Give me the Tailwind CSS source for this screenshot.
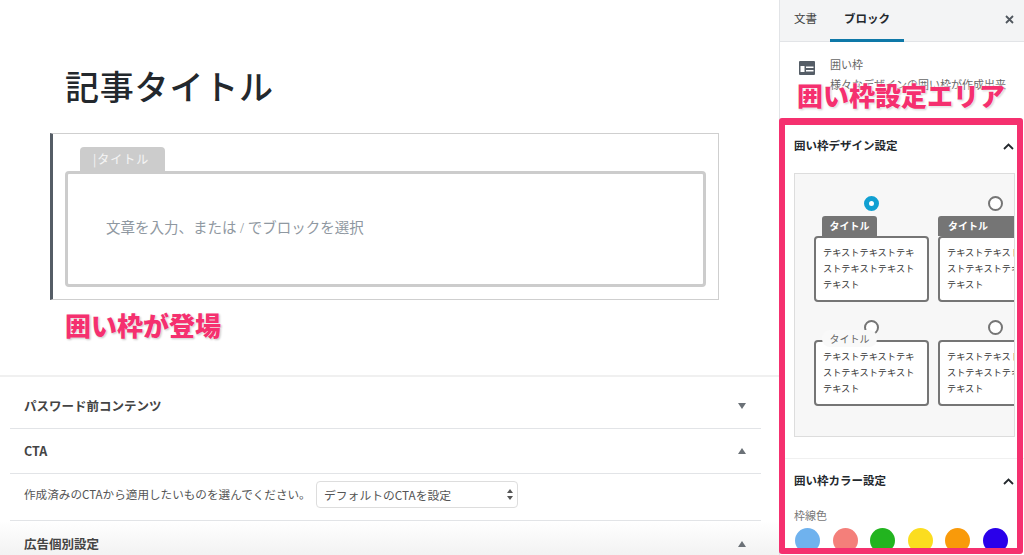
<!DOCTYPE html>
<html lang="ja">
<head>
  <meta charset="UTF-8">
  <meta name="viewport" content="width=device-width, initial-scale=1.0">
  <title>記事タイトル</title>
  <script src="https://cdn.jsdelivr.net/npm/@tailwindcss/browser@4"></script>
</head>
<body class="bg-white">
  <div class="relative flex w-[1024px] h-[555px] overflow-hidden font-['Noto_Sans_CJK_JP',sans-serif] text-[#23282d]">

    <!-- editor -->
    <main class="w-[779px] shrink-0 flex flex-col">
      <div class="h-[133px] shrink-0 pl-[65px] pt-[63px]">
        <h1 class="text-[34px] leading-[52px] font-medium tracking-[0.8px] font-['Liberation_Serif','Noto_Sans_CJK_JP',serif]">記事タイトル</h1>
      </div>

      <div class="ml-[50px] w-[669px] h-[167px] shrink-0 border border-[#cfcfcf] border-l-[3px] border-l-[#555d66] pl-[12px] pr-[12px] pt-[13px]">
        <div class="ml-[15px] w-[85px] h-[24px] bg-[#cccccc] rounded-t-[4px] pl-[13px] text-[12px] leading-[24px] tracking-[1px] text-white/80">|タイトル</div>
        <div class="h-[116px] border-[3px] border-[#cccccc] rounded-[4px] pl-[38px] flex items-center text-[14.5px] text-[#8f98a1] font-['Liberation_Serif','Noto_Sans_CJK_JP',serif]">文章を入力、または / でブロックを選択</div>
      </div>

      <div class="h-[75px] shrink-0 pl-[65px] pt-[7px]">
        <p class="text-[26px] leading-[36px] font-black text-[#f5306f] [text-shadow:0_0_3px_#fff,1px_1px_2px_rgba(0,0,0,0.3)]">囲い枠が登場</p>
      </div>

      <section class="flex-1 border-t-2 border-[#f0f0f0] pl-[10px] pr-[18px]">
        <div class="h-[52px] border-b border-[#e2e4e7] pl-[14px] pr-[14px] pt-[7px] flex items-center justify-between">
          <h3 class="text-[12.5px] font-bold text-[#444]">パスワード前コンテンツ</h3>
          <svg class="w-[8px] h-[6px] mr-[1px]" viewBox="0 0 8 6"><path d="M0 0h8L4 6z" fill="#6b7177"/></svg>
        </div>
        <div class="h-[45px] border-b border-[#e2e4e7] pl-[14px] pr-[14px] flex items-center justify-between">
          <h3 class="text-[12.5px] font-bold text-[#444]">CTA</h3>
          <svg class="w-[8px] h-[6px] mr-[1px]" viewBox="0 0 8 6"><path d="M0 6h8L4 0z" fill="#6b7177"/></svg>
        </div>
        <div class="h-[47px] border-b border-[#e2e4e7] pl-[14px] pt-[7px] flex items-start">
          <p class="text-[11.6px] leading-[26px] text-[#555] w-[292px] whitespace-nowrap">作成済みのCTAから適用したいものを選んでください。</p>
          <div class="w-[202px] h-[27px] border border-[#dddddd] rounded-[4px] pl-[7px] pr-[4px] flex items-center justify-between text-[11.8px] text-[#555]">
            <span>デフォルトのCTAを設定</span>
            <svg class="w-[6px] h-[11px]" viewBox="0 0 6 11"><path d="M0 4h6L3 0zM0 7h6l-3 4z" fill="#555"/></svg>
          </div>
        </div>
        <div class="-ml-[10px] -mr-[18px] pl-[10px] pr-[18px] h-[40px] bg-gradient-to-b from-white to-[#f0f0f0]">
          <div class="pl-[14px] pr-[14px] h-[46px] flex items-center justify-between">
            <h3 class="text-[12.5px] font-bold text-[#444]">広告個別設定</h3>
            <svg class="w-[8px] h-[6px] mr-[1px]" viewBox="0 0 8 6"><path d="M0 6h8L4 0z" fill="#6b7177"/></svg>
          </div>
        </div>
      </section>
    </main>

    <!-- sidebar -->
    <aside class="w-[245px] shrink-0 border-l border-[#e2e4e7] flex flex-col">
      <div class="h-[42px] shrink-0 bg-[#f3f4f5] border-b border-[#e2e4e7] flex items-center pl-[14px] pr-[10px] pb-[4px] relative">
        <span class="text-[11.5px] text-[#444] w-[50px]">文書</span>
        <span class="text-[11.5px] font-bold">ブロック</span>
        <svg class="ml-auto w-[9px] h-[9px] mt-[2px]" viewBox="0 0 9 9"><path d="M1 1l7 7M8 1L1 8" stroke="#50575e" stroke-width="1.8"/></svg>
        <div class="absolute left-[50px] bottom-[-1px] w-[74px] h-[3px] bg-[#0e78a8]"></div>
      </div>

      <div class="h-[76px] shrink-0 pl-[19px] pt-[17px] flex gap-[15px] overflow-hidden">
        <svg class="w-[16px] h-[14px] mt-[2px] shrink-0" viewBox="0 0 16 14"><rect width="16" height="14" rx="1" fill="#555d66"/><rect x="1.5" y="5" width="4" height="6" fill="#fff"/><path d="M7 5.5h7.5v1.5H7zM7 9h7.5v1.5H7z" fill="#fff"/></svg>
        <div class="text-[11px] text-[#666] whitespace-nowrap">
          <p class="leading-[14px] mt-[-2px]">囲い枠</p>
          <p class="leading-[14px] mt-[6px]">様々なデザインの囲い枠が作成出来</p>
        </div>
      </div>

      <div class="pl-[14px] pr-[9px]">
        <div class="h-[55px] pt-[19px] flex justify-between pr-[1px]">
          <h3 class="text-[11.5px] font-bold leading-[16px]">囲い枠デザイン設定</h3>
          <svg class="w-[11px] h-[7px] mt-[6px]" viewBox="0 0 11 7"><path d="M1 6l4.5-4.5L10 6" fill="none" stroke="#23282d" stroke-width="1.8"/></svg>
        </div>
        <div class="w-[221px] h-[264px] border border-[#dddddd] bg-[#f7f7f7] overflow-hidden pl-[19px] pt-[22px]">
          <div class="grid grid-cols-[115px_115px] gap-x-[9px] w-[300px]">
            <div class="h-[124px]">
              <div class="mx-auto w-[15px] h-[15px] rounded-full border-[5px] border-[#11a0d2] bg-white"></div>
              <div class="ml-[8px] mt-[5px] w-[55px] h-[20px] bg-[#757575] rounded-t-[3px] text-white text-[10px] font-bold text-center leading-[20px]">タイトル</div>
              <div class="w-[115px] h-[66px] bg-white border-2 border-[#757575] rounded-[4px] px-[7px] py-[6px] text-[9.2px] leading-[16px] text-[#333]">テキストテキストテキストテキストテキストテキスト</div>
            </div>
            <div class="h-[124px]">
              <div class="mx-auto w-[15px] h-[15px] rounded-full border-2 border-[#757575] bg-white"></div>
              <div class="mt-[5px] w-[115px] h-[20px] bg-[#757575] rounded-t-[3px] text-white text-[10px] font-bold pl-[10px] leading-[20px]">タイトル</div>
              <div class="w-[115px] h-[66px] bg-white border-2 border-[#757575] rounded-[4px] px-[7px] py-[6px] text-[9.2px] leading-[16px] text-[#333]">テキストテキストテキストテキストテキストテキスト</div>
            </div>
            <div class="relative">
              <div class="mx-auto w-[15px] h-[15px] rounded-full border-2 border-[#757575] bg-white"></div>
              <div class="w-[115px] h-[66px] mt-[5px] bg-white border-2 border-[#757575] rounded-[4px] px-[7px] pt-[6px] text-[9.2px] leading-[16px] text-[#333]">テキストテキストテキストテキストテキストテキスト</div>
              <div class="absolute left-[8px] top-[10px] w-[55px] h-[17px] bg-[#f9f9f9] rounded-[8px] text-[10px] leading-[17px] text-center text-[#666]">タイトル</div>
            </div>
            <div>
              <div class="mx-auto w-[15px] h-[15px] rounded-full border-2 border-[#757575] bg-white"></div>
              <div class="w-[115px] h-[66px] mt-[5px] bg-white border-2 border-[#757575] rounded-[4px] px-[7px] pt-[6px] text-[9.2px] leading-[16px] text-[#333]">テキストテキストテキストテキストテキストテキスト</div>
            </div>
          </div>
        </div>
      </div>

      <div class="mt-[21px] border-t border-[#f0f0f0] pl-[14px] pr-[10px] pt-[13px]">
        <div class="flex justify-between">
          <h3 class="text-[11.5px] font-bold leading-[16px]">囲い枠カラー設定</h3>
          <svg class="w-[11px] h-[7px] mt-[6px]" viewBox="0 0 11 7"><path d="M1 6l4.5-4.5L10 6" fill="none" stroke="#23282d" stroke-width="1.8"/></svg>
        </div>
        <p class="mt-[20px] text-[11px] leading-[14px] text-[#777]">枠線色</p>
        <div class="mt-[6px] ml-[1px] flex gap-[12.5px]">
          <span class="w-[25px] h-[25px] shrink-0 rounded-full bg-[#6fb2ee]"></span>
          <span class="w-[25px] h-[25px] shrink-0 rounded-full bg-[#f47f7a]"></span>
          <span class="w-[25px] h-[25px] shrink-0 rounded-full bg-[#22b41f]"></span>
          <span class="w-[25px] h-[25px] shrink-0 rounded-full bg-[#fbdd1f]"></span>
          <span class="w-[25px] h-[25px] shrink-0 rounded-full bg-[#f99a0a]"></span>
          <span class="w-[25px] h-[25px] shrink-0 rounded-full bg-[#2a00ea]"></span>
        </div>
      </div>
    </aside>

    <!-- annotation over the sidebar -->
    <div class="absolute left-[779px] top-[118px] w-[244px] h-[436px] border-[6px] border-t-[7px] border-[#f5306f] rounded-[3px] pointer-events-none"></div>
    <p class="absolute left-[797px] top-[77px] text-[26px] leading-[36px] font-black whitespace-nowrap text-[#f5306f] [text-shadow:0_0_3px_#fff,0_0_3px_#fff,1px_1px_2px_rgba(0,0,0,0.3)]">囲い枠設定エリア</p>
  </div>
</body>
</html>
